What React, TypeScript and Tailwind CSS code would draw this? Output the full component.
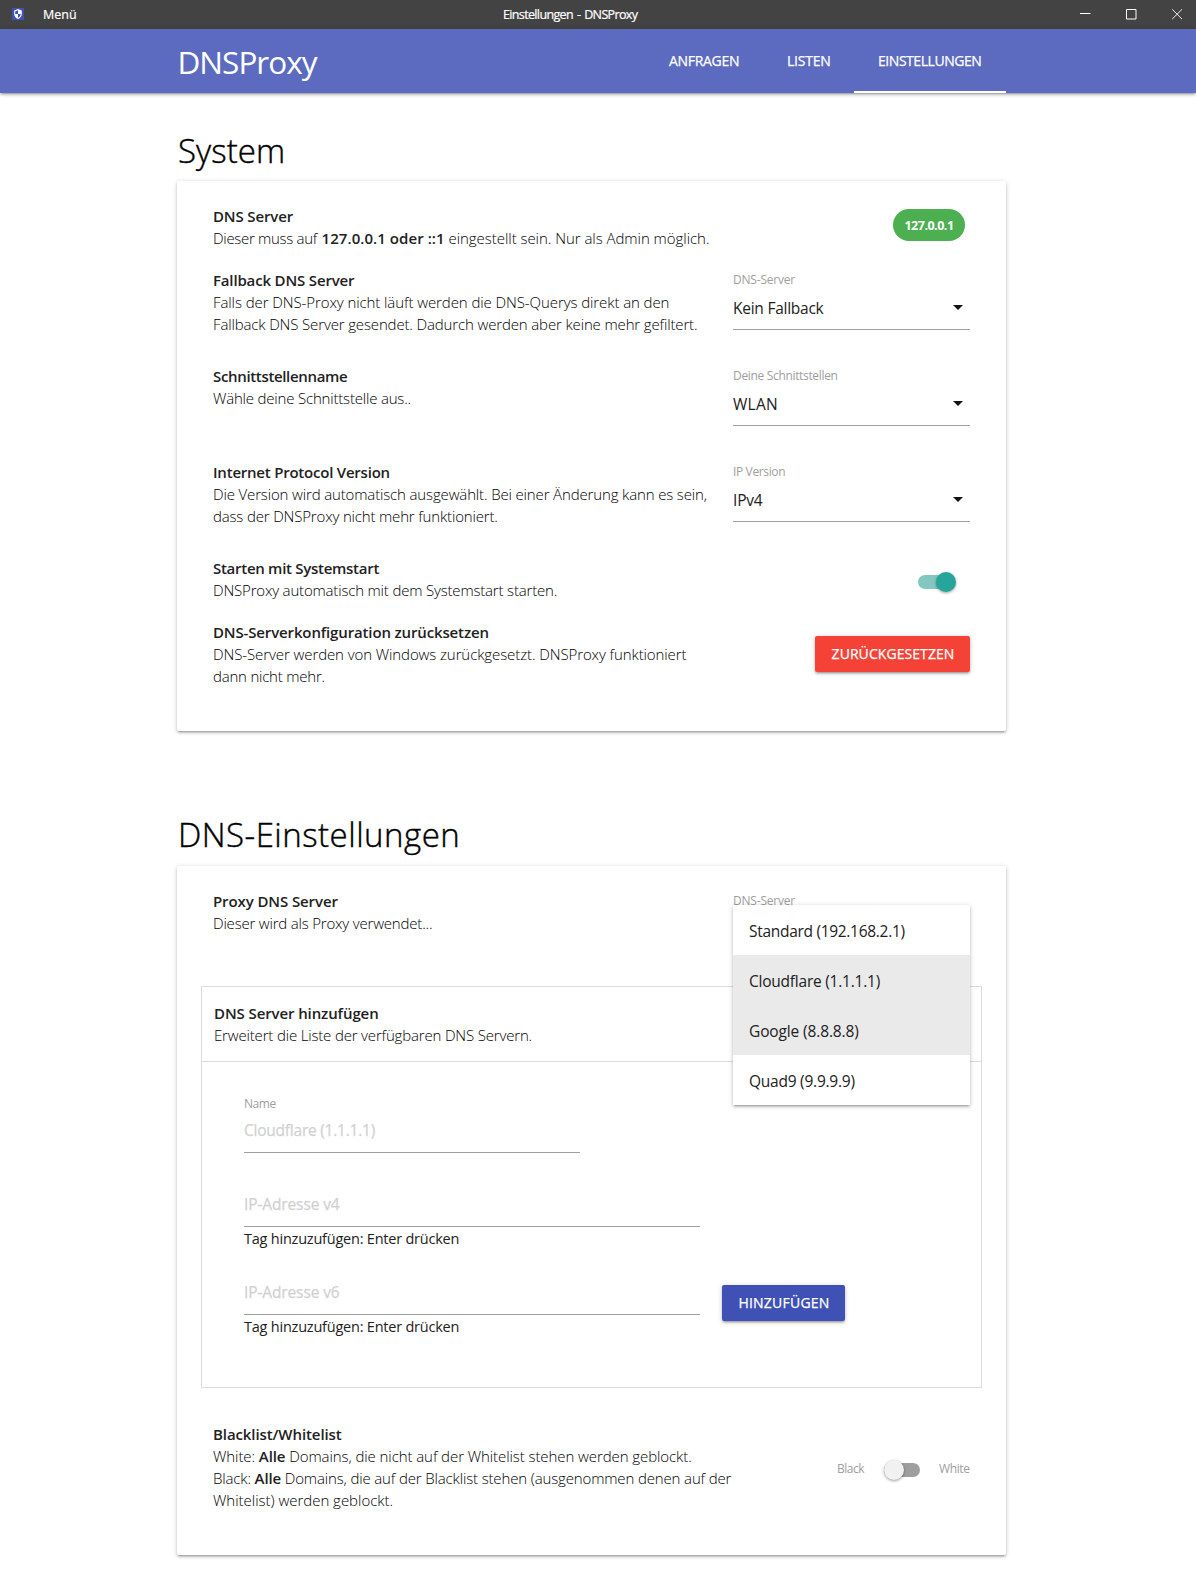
import type { ReactNode } from "react";

const SHADOW =
  "shadow-[0_2px_2px_0_rgba(0,0,0,0.14),0_3px_1px_-2px_rgba(0,0,0,0.12),0_1px_5px_0_rgba(0,0,0,0.2)]";

function Line({ className = "", children }: { className?: string; children: ReactNode }) {
  return <div className={`h-[22px] whitespace-nowrap ${className}`}>{children}</div>;
}

function Title({ className = "", children }: { className?: string; children: ReactNode }) {
  return <h3 className={`h-[22px] whitespace-nowrap font-semibold text-[#212121] ${className}`}>{children}</h3>;
}

function Row({ className, control, children }: { className: string; control: ReactNode; children: ReactNode }) {
  return (
    <div className={`flex justify-between ${className}`}>
      <div className="text-[15px] leading-[22px] font-light text-black">{children}</div>
      {control}
    </div>
  );
}

function Select({ label, labelClass, value, valueClass }: { label: string; labelClass: string; value: string; valueClass: string }) {
  return (
    <div className="w-[237px] pt-[2px]">
      <div className={`h-[18px] text-xs leading-[18px] text-[#9e9e9e] ${labelClass}`}>{label}</div>
      <div className="mt-[6px] flex h-[35px] items-start justify-between border-b border-[#9e9e9e] pr-[7px]">
        <span className={`text-[15.5px] leading-[26px] text-[#212121] ${valueClass}`}>{value}</span>
        <svg className="mt-[10px] h-[5px] w-[10px]" viewBox="0 0 10 5">
          <path d="M0 0h10L5 5z" fill="#111" />
        </svg>
      </div>
    </div>
  );
}

function TitleBar() {
  return (
    <div className="flex h-[29px] bg-[#434343] text-[12.5px] leading-[29px] text-white">
      <div className="flex w-[503px] items-start">
        <svg className="mt-2 ml-3 h-3 w-3" viewBox="0 0 12 12">
          <rect width="12" height="12" fill="#3f51b5" />
          <path d="M6 1 2.2 2.6V6c0 2.2 1.6 4.1 3.8 5 2.2-.9 3.8-2.8 3.8-5V2.600z" fill="#fff" />
          <path d="M6 2.200V6H3.200v-2.600zM6 6h2.800C8.500 7.700 7.400 9.100 6 9.800z" fill="#3f51b5" />
        </svg>
        <span className="ml-[19px] [-webkit-text-stroke:0.2px]">Menü</span>
      </div>
      <span className="w-[560px] tracking-[-0.64px] [-webkit-text-stroke:0.2px] [word-spacing:1.3px]">
        Einstellungen - DNSProxy
      </span>
      <div className="flex pt-[9px]">
        <svg className="h-[11px] w-[120px]" viewBox="0 0 120 11" fill="none" stroke="#fff">
          <path d="M17 4.500h10.500M63.500 .5h9.500v9.500h-9.500z" />
          <path d="M119 .3l-9.800 9.800M109.200 .3l9.800 9.800" strokeWidth="0.9" />
        </svg>
      </div>
    </div>
  );
}

function Header() {
  return (
    <header className={`relative h-16 bg-[#5c6bc0] text-white ${SHADOW}`}>
      <div className="ml-[177px] flex w-[829px] justify-between">
        <div className="pl-[0.500px] text-[31.5px] leading-[66px] tracking-[-0.99px]">DNSProxy</div>
        <nav className="flex text-sm leading-16 [-webkit-text-stroke:0.25px]">
          <a className="h-16 w-[118px] pl-6 tracking-[-0.3px]">ANFRAGEN</a>
          <a className="h-16 w-[91px] pl-6 tracking-[-0.22px]">LISTEN</a>
          <a className="h-16 w-[152px] border-b-2 border-white pl-6 tracking-[-0.45px]">EINSTELLUNGEN</a>
        </nav>
      </div>
    </header>
  );
}

function Button({ className, children }: { className: string; children: ReactNode }) {
  return (
    <button
      className={`h-9 shrink-0 rounded-[2px] text-center text-sm leading-9 text-white [-webkit-text-stroke:0.25px] ${SHADOW} ${className}`}
    >
      {children}
    </button>
  );
}

const OPTIONS = [
  { label: "Standard (192.168.2.1)", style: "tracking-[-0.3px]" },
  { label: "Cloudflare (1.1.1.1)", style: "tracking-[-0.23px] bg-[#eaeaea]" },
  { label: "Google (8.8.8.8)", style: "tracking-[-0.13px] bg-[#eaeaea]" },
  { label: "Quad9 (9.9.9.9)", style: "tracking-[-0.24px]" },
];

function OpenSelect() {
  return (
    <div className="relative w-[237px] pt-[2px]">
      <div className="h-[18px] text-xs leading-[18px] tracking-[-0.2px] text-[#9e9e9e]">DNS-Server</div>
      <ul className={`absolute top-[15px] left-0 z-10 w-[237px] bg-white ${SHADOW}`}>
        {OPTIONS.map((o) => (
          <li key={o.label} className={`h-[50px] pl-4 text-[15.5px] leading-[52px] text-[#212121] ${o.style}`}>
            {o.label}
          </li>
        ))}
      </ul>
    </div>
  );
}

function Placeholder({ className, children }: { className: string; children: ReactNode }) {
  return (
    <div
      className={`border-b border-[#9e9e9e] text-[15.5px] leading-[22px] text-[#d1d1d1] [-webkit-text-stroke:0.25px] ${className}`}
    >
      {children}
    </div>
  );
}

function Helper() {
  return (
    <div className="h-[22px] text-[14.5px] leading-6 tracking-[-0.22px] whitespace-nowrap text-[#212121]">
      Tag hinzuzufügen: Enter drücken
    </div>
  );
}

export default function App() {
  return (
    <div className="h-[1594px] overflow-hidden bg-white font-['Open_Sans','Noto_Sans',sans-serif] text-black">
      <TitleBar />
      <Header />
      <main className="ml-[177px] w-[829px]">
        <h2 className="h-[88px] pt-[33px] pl-px text-[33px] leading-[50px] font-light tracking-[0.08px] [-webkit-text-stroke:0.4px]">
          System
        </h2>
        <section className={`h-[550px] rounded-[2px] bg-white px-9 pt-6 ${SHADOW}`}>
          <Row
            className="h-16"
            control={
              <div className="mt-1 mr-[5px] h-8 w-[72px] rounded-full bg-[#4caf50] text-center text-[12.5px] leading-[33px] font-bold tracking-[-0.49px] text-white">
                127.0.0.1
              </div>
            }
          >
            <Title className="tracking-[-0.13px]">DNS Server</Title>
            <Line>
              <span className="tracking-[-0.3px]">Dieser muss auf </span>
              <b className="ml-px font-semibold tracking-[0.06px] text-[#212121]">127.0.0.1 oder ::1</b>
              <span className="tracking-[-0.04px]"> eingestellt sein. Nur als Admin möglich.</span>
            </Line>
          </Row>
          <Row
            className="h-24"
            control={<Select label="DNS-Server" labelClass="tracking-[-0.2px]" value="Kein Fallback" valueClass="tracking-[-0.25px]" />}
          >
            <Title className="tracking-[-0.16px]">Fallback DNS Server</Title>
            <Line className="tracking-[-0.085px]">Falls der DNS-Proxy nicht läuft werden die DNS-Querys direkt an den</Line>
            <Line className="tracking-[-0.142px]">Fallback DNS Server gesendet. Dadurch werden aber keine mehr gefiltert.</Line>
          </Row>
          <Row
            className="h-24"
            control={<Select label="Deine Schnittstellen" labelClass="tracking-[-0.33px]" value="WLAN" valueClass="tracking-[0.3px]" />}
          >
            <Title className="tracking-[-0.34px]">Schnittstellenname</Title>
            <Line className="tracking-[-0.19px]">Wähle deine Schnittstelle aus..</Line>
          </Row>
          <Row
            className="h-24"
            control={<Select label="IP Version" labelClass="tracking-[-0.36px]" value="IPv4" valueClass="tracking-[-0.2px]" />}
          >
            <Title className="tracking-[-0.22px]">Internet Protocol Version</Title>
            <Line className="tracking-[-0.145px]">Die Version wird automatisch ausgewählt. Bei einer Änderung kann es sein,</Line>
            <Line className="tracking-[-0.167px]">dass der DNSProxy nicht mehr funktioniert.</Line>
          </Row>
          <Row
            className="h-16"
            control={
              <div className="mt-[15px] mr-[14px] flex h-5 w-[38px] items-center">
                <span className="h-[14px] w-[36px] rounded-full bg-[#84c7c1]" />
                <span className="-ml-[18px] h-5 w-5 shrink-0 rounded-full bg-[#26a69a] shadow-[0_1px_3px_rgba(0,0,0,0.4)]" />
              </div>
            }
          >
            <Title className="tracking-[-0.28px]">Starten mit Systemstart</Title>
            <Line className="tracking-[-0.18px]">DNSProxy automatisch mit dem Systemstart starten.</Line>
          </Row>
          <Row
            className="h-24"
            control={<Button className="mt-[15px] w-[155px] bg-[#f44336] pl-px tracking-[0.07px]">ZURÜCKGESETZEN</Button>}
          >
            <Title className="tracking-[-0.14px]">DNS-Serverkonfiguration zurücksetzen</Title>
            <Line className="tracking-[-0.095px]">DNS-Server werden von Windows zurückgesetzt. DNSProxy funktioniert</Line>
            <Line className="tracking-[-0.22px]">dann nicht mehr.</Line>
          </Row>
        </section>

        <h2 className="mt-[46px] h-[89px] pt-[33px] pl-px text-[33px] leading-[50px] font-light tracking-[0.48px] [-webkit-text-stroke:0.4px]">
          DNS-Einstellungen
        </h2>
        <section className={`h-[689px] rounded-[2px] bg-white px-6 pt-6 ${SHADOW}`}>
          <Row className="h-24 px-3" control={<OpenSelect />}>
            <Title className="tracking-[-0.1px]">Proxy DNS Server</Title>
            <Line className="tracking-[-0.19px]">Dieser wird als Proxy verwendet...</Line>
          </Row>

          <div className="h-[402px] w-[781px] border border-[#dcdcdc]">
            <div className="h-[75px] border-b border-[#dcdcdc] pt-[15px] pl-3 text-[15px] leading-[22px] font-light">
              <Title className="tracking-[-0.1px]">DNS Server hinzufügen</Title>
              <Line className="tracking-[-0.17px]">Erweitert die Liste der verfügbaren DNS Servern.</Line>
            </div>
            <div className="pt-[32px] pl-[42px]">
              <div className="h-[18px] text-xs leading-[19px] tracking-[-0.42px] text-[#9e9e9e]">Name</div>
              <Placeholder className="mt-[7px] h-[34px] w-[336px] tracking-[-0.23px]">Cloudflare (1.1.1.1)</Placeholder>
              <Placeholder className="mt-[40px] h-[34px] w-[456px] tracking-[-0.12px]">IP-Adresse v4</Placeholder>
              <Helper />
              <div className="mt-[32px] flex gap-[22px]">
                <div>
                  <Placeholder className="h-[34px] w-[456px] tracking-[-0.12px]">IP-Adresse v6</Placeholder>
                  <Helper />
                </div>
                <Button className="mt-[4px] w-[123px] bg-[#3f51b5] pl-px tracking-[0.22px]">HINZUFÜGEN</Button>
              </div>
            </div>
          </div>

          <Row
            className="mt-[35px] px-3"
            control={
              <div className="mt-[37px] flex h-5 items-center text-xs text-[#9e9e9e]">
                <span className="w-[46.500px] pb-[2px] tracking-[-0.47px]">Black</span>
                <span className="flex w-[55.500px] items-center">
                  <span className="z-10 h-5 w-5 shrink-0 rounded-full bg-[#f1f1f1] shadow-[0_1px_3px_rgba(0,0,0,0.4)]" />
                  <span className="-ml-[20px] h-[14px] w-[36px] rounded-full bg-[#9e9e9e]" />
                </span>
                <span className="w-[31px] pb-[2px] tracking-[-0.4px]">White</span>
              </div>
            }
          >
            <Title className="tracking-[-0.09px]">Blacklist/Whitelist</Title>
            <Line className="tracking-[-0.08px]">
              White: <b className="font-semibold text-[#212121]">Alle</b> Domains, die nicht auf der Whitelist stehen werden geblockt.
            </Line>
            <Line className="tracking-[-0.142px]">
              Black: <b className="font-semibold text-[#212121]">Alle</b> Domains, die auf der Blacklist stehen (ausgenommen denen auf der
            </Line>
            <Line className="tracking-[-0.02px]">Whitelist) werden geblockt.</Line>
          </Row>
        </section>
      </main>
    </div>
  );
}
